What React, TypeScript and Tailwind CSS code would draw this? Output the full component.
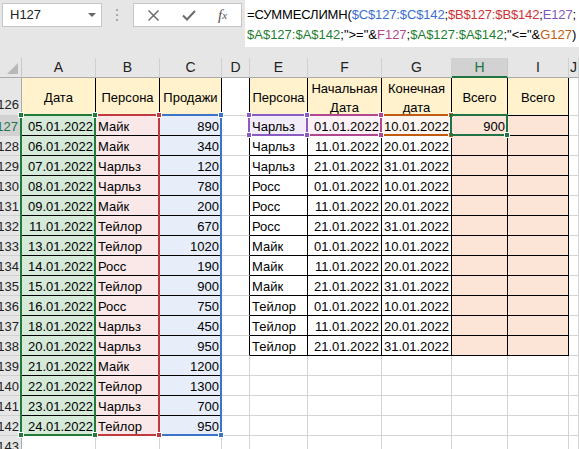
import { Fragment } from 'react';
import clsx from 'clsx';

type Cell = { t?: string; al?: 'l' | 'r' | 'c'; bg?: string; r?: boolean; b?: boolean; wrap?: boolean };

const YEL = 'bg-[#fff2cc]';
const GRN = 'bg-[#d6ead9]';
const PNK = 'bg-[#fae8e9]';
const BLU = 'bg-[#e7eef9]';
const PCH = 'bg-[#fce4d6]';

const COLS = ['A', 'B', 'C', 'D', 'E', 'F', 'G', 'H', 'I', 'J'];

const sales = [
  ['05.01.2022', 'Майк', '890'],
  ['06.01.2022', 'Майк', '340'],
  ['07.01.2022', 'Чарльз', '120'],
  ['08.01.2022', 'Чарльз', '780'],
  ['09.01.2022', 'Майк', '200'],
  ['11.01.2022', 'Тейлор', '670'],
  ['13.01.2022', 'Тейлор', '1020'],
  ['14.01.2022', 'Росс', '190'],
  ['15.01.2022', 'Тейлор', '900'],
  ['16.01.2022', 'Росс', '750'],
  ['18.01.2022', 'Чарльз', '450'],
  ['20.01.2022', 'Чарльз', '950'],
  ['21.01.2022', 'Майк', '1200'],
  ['22.01.2022', 'Тейлор', '1300'],
  ['23.01.2022', 'Чарльз', '700'],
  ['24.01.2022', 'Тейлор', '950'],
];

const names = ['Чарльз', 'Росс', 'Майк', 'Тейлор'];
const ranges = [
  ['01.01.2022', '10.01.2022'],
  ['11.01.2022', '20.01.2022'],
  ['21.01.2022', '31.01.2022'],
];
const periods = names.flatMap((n) => ranges.map((r) => [n, r[0], r[1]]));

// build the sheet rows 126..143
const rows: { n: number; cells: Cell[] }[] = [
  {
    n: 126,
    cells: [
      { t: 'Дата', al: 'c', bg: YEL, r: true, b: true },
      { t: 'Персона', al: 'c', bg: YEL, r: true, b: true },
      { t: 'Продажи', al: 'c', bg: YEL, r: true, b: true },
      { r: true },
      { t: 'Персона', al: 'c', bg: YEL, r: true, b: true },
      { t: 'Начальная Дата', al: 'c', bg: YEL, r: true, b: true, wrap: true },
      { t: 'Конечная дата', al: 'c', bg: YEL, r: true, b: true, wrap: true },
      { t: 'Всего', al: 'c', bg: YEL, r: true, b: true },
      { t: 'Всего', al: 'c', bg: YEL, r: true, b: true },
      {},
    ],
  },
];

for (let i = 0; i < 17; i++) {
  const s = sales[i];
  const p = periods[i];
  const cells: Cell[] = s
    ? [
        { t: s[0], al: 'r', bg: GRN, r: true, b: true },
        { t: s[1], bg: PNK, r: true, b: true },
        { t: s[2], al: 'r', bg: BLU, r: true, b: true },
      ]
    : [{}, {}, {}];
  if (p) {
    cells.push(
      { r: true },
      { t: p[0], bg: i === 0 ? 'bg-[#f1ecf8]' : undefined, r: true, b: true },
      { t: p[1], al: 'r', bg: i === 0 ? 'bg-[#fbf1f6]' : undefined, r: true, b: true },
      { t: p[2], al: 'r', bg: i === 0 ? 'bg-[#fdf5ef]' : undefined, r: true, b: true },
      { t: i === 0 ? '900' : undefined, al: 'r', bg: PCH, r: true, b: true },
      { bg: PCH, r: true, b: true },
    );
  } else {
    cells.push({}, {}, {}, {}, {}, {});
  }
  cells.push({});
  rows.push({ n: 127 + i, cells });
}

function SheetCell({ c }: { c: Cell }) {
  return (
    <div
      className={clsx(
        'flex overflow-hidden border-r border-b px-[2px]',
        c.bg ?? 'bg-white',
        c.r ? 'border-r-black' : 'border-r-[#d4d4d4]',
        c.b ? 'border-b-black' : 'border-b-[#d4d4d4]',
        c.wrap ? 'items-center whitespace-normal text-center leading-[19px]' : 'items-center whitespace-nowrap',
        c.al === 'r' && 'justify-end',
        c.al === 'c' && 'justify-center',
      )}
    >
      {c.t && <span className="pt-[2px]">{c.t}</span>}
    </div>
  );
}

function Handle({ pos, color }: { pos: string; color: string }) {
  return <div className={clsx('absolute w-[6px] h-[6px] border border-white', pos, color)} />;
}

function RefBox({ box, border, fill, onlyFill }: { box: string; border: string; fill: string; onlyFill?: boolean }) {
  return (
    <div className={clsx('absolute border-2 pointer-events-none', box, border)}>
      {!onlyFill && (
        <>
          <Handle pos="-left-[4px] -top-[4px]" color={fill} />
          <Handle pos="-right-[4px] -top-[4px]" color={fill} />
          <Handle pos="-left-[4px] -bottom-[4px]" color={fill} />
        </>
      )}
      <Handle pos="-right-[4px] -bottom-[4px]" color={fill} />
    </div>
  );
}

function FormulaBar() {
  return (
    <div className="flex h-[58px] items-start">
      {/* name box */}
      <div className="ml-[2px] mt-[3px] flex h-[24px] w-[100px] items-center justify-between border border-[#c6c6c6] bg-white pl-[7px] pr-[5px]">
        <span className="text-[13px] text-[#222]">H127</span>
        <svg width="8" height="4" viewBox="0 0 8 4">
          <polygon points="0,0 8,0 4,4" fill="#666" />
        </svg>
      </div>
      {/* grip dots */}
      <div className="flex h-[30px] w-[31px] flex-col items-center justify-center gap-[3px] pr-[1px]">
        <div className="h-[2px] w-[2px] bg-[#a8a8a8]" />
        <div className="h-[2px] w-[2px] bg-[#a8a8a8]" />
        <div className="h-[2px] w-[2px] bg-[#a8a8a8]" />
      </div>
      {/* cancel / enter / fx */}
      <div className="mt-[3px] flex h-[24px] w-[109px] items-center border border-[#c6c6c6] bg-white text-[#666]">
        <div className="flex w-[38px] justify-center">
          <svg width="11" height="11" viewBox="0 0 11 11" stroke="#6b6b6b" strokeWidth="1.4">
            <line x1="0.5" y1="0.5" x2="10.5" y2="10.5" />
            <line x1="10.5" y1="0.5" x2="0.5" y2="10.5" />
          </svg>
        </div>
        <div className="flex w-[34px] justify-center">
          <svg width="14" height="11" viewBox="0 0 14 11" fill="none" stroke="#6b6b6b" strokeWidth="2">
            <polyline points="1,5.5 5,9.5 13,1" />
          </svg>
        </div>
        <div className="flex flex-1 justify-center pr-[2px] font-['Liberation_Serif',serif] italic text-[#555]">
          <span className="text-[15px]">f</span>
          <span className="mt-[3px] text-[11px]">x</span>
        </div>
      </div>
      {/* formula text */}
      <div className="ml-[3px] h-[47px] flex-1 overflow-hidden whitespace-nowrap bg-white pl-[2px] pt-[5px] text-[13px] leading-[20px] text-black">
        <div className="tracking-[-0.15px]">
          =СУММЕСЛИМН(<span className="text-[#3b6fd0]">$C$127:$C$142</span>;
          <span className="text-[#cf3236]">$B$127:$B$142</span>;<span className="text-[#8058b8]">E127</span>;
        </div>
        <div>
          <span className="text-[#1f8031]">$A$127:$A$142</span>;"&gt;="&amp;
          <span className="text-[#b5468e]">F127</span>;<span className="text-[#1f8031]">$A$127:$A$142</span>;"&lt;="&amp;
          <span className="text-[#c55a11]">G127</span>)
        </div>
      </div>
    </div>
  );
}

function Sheet() {
  return (
    <div className="relative h-[391px] overflow-hidden">
      <div className="grid grid-cols-[22px_74px_64px_62px_28px_58px_74px_70px_56px_61px_10px] grid-rows-[20px_38px_repeat(17,20px)]">
        {/* corner */}
        <div className="relative border-r border-b border-r-[#c8c8c8] border-b-[#ababab] bg-[#e6e6e6]">
          <svg className="absolute left-0 top-0" width="22" height="20" viewBox="0 0 22 20">
            <polygon points="18,5 18,16 7,16" fill="#b8b8b8" />
          </svg>
        </div>
        {COLS.map((c) =>
          c === 'H' ? (
            <div
              key={c}
              className="flex items-center justify-center border-r border-b-2 border-r-[#c8c8c8] border-b-[#217346] bg-[#d2d2d2] pt-[1px] text-[14px] text-[#217346]"
            >
              {c}
            </div>
          ) : (
            <div
              key={c}
              className="flex items-center justify-center border-r border-b border-r-[#d0d0d0] border-b-[#ababab] bg-[#e6e6e6] text-[14px] text-[#222]"
            >
              {c}
            </div>
          ),
        )}
        {rows.map((row) => (
          <Fragment key={row.n}>
            <div
              className={clsx(
                'flex justify-end overflow-hidden border-b border-b-[#d0d0d0] pr-[2px]',
                row.n === 126 ? 'items-end pb-[1px]' : 'items-center pt-[2px]',
                row.n === 127
                  ? 'border-r-2 border-r-[#217346] bg-[#d2d2d2] text-[#217346]'
                  : 'border-r border-r-[#ababab] bg-[#e6e6e6] text-[#222]',
              )}
            >
              {row.n}
            </div>
            {row.cells.map((c, i) => (
              <SheetCell key={i} c={c} />
            ))}
          </Fragment>
        ))}
      </div>

      {/* range references of the formula */}
      <RefBox box="left-[158px] top-[56px] w-[64px] h-[322px]" border="border-[#3d73c9]" fill="bg-[#3d73c9]" />
      <RefBox box="left-[94px] top-[56px] w-[66px] h-[322px]" border="border-[#c0393f]" fill="bg-[#c0393f]" />
      <RefBox box="left-[20px] top-[56px] w-[76px] h-[322px]" border="border-[#217a37]" fill="bg-[#217a37]" />
      <RefBox box="left-[380px] top-[56px] w-[72px] h-[22px]" border="border-[#c05a10]" fill="bg-[#c05a10]" />
      <RefBox box="left-[306px] top-[56px] w-[76px] h-[22px]" border="border-[#b0478f]" fill="bg-[#b0478f]" />
      <RefBox box="left-[248px] top-[56px] w-[60px] h-[22px]" border="border-[#8a5bc0]" fill="bg-[#8a5bc0]" />
      {/* active cell */}
      <RefBox box="left-[450px] top-[56px] w-[58px] h-[22px]" border="border-[#217346]" fill="bg-[#217346]" onlyFill />
    </div>
  );
}

export default function App() {
  return (
    <div className="h-[449px] w-[579px] overflow-hidden bg-[#e6e6e6] font-['Liberation_Sans',Arial,sans-serif] text-[13px] text-black">
      <FormulaBar />
      <Sheet />
    </div>
  );
}
